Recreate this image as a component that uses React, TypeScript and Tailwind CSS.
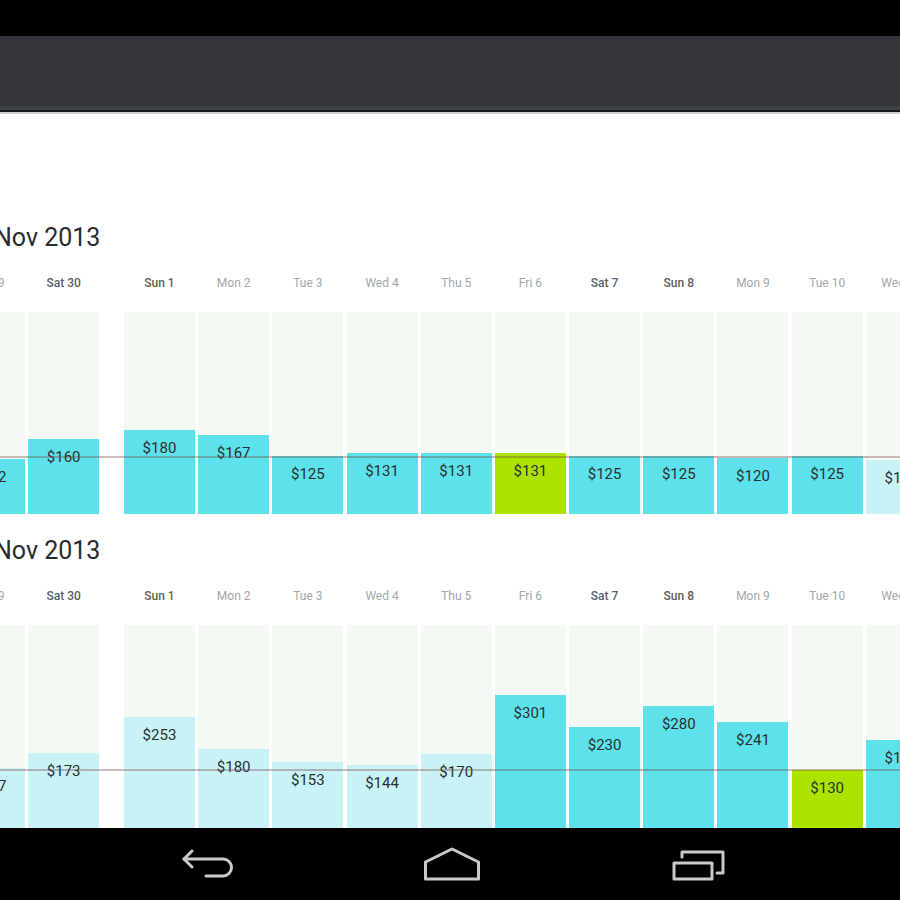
import React from "react";

type Col = { label: string; weekend?: boolean; value: string; h: number; color: "cyan" | "light" | "green" };

const chart1: Col[][] = [
  [
    { label: "Fri 29", value: "$122", h: 55, color: "cyan" },
    { label: "Sat 30", weekend: true, value: "$160", h: 75, color: "cyan" },
  ],
  [
    { label: "Sun 1", weekend: true, value: "$180", h: 84, color: "cyan" },
    { label: "Mon 2", value: "$167", h: 79, color: "cyan" },
    { label: "Tue 3", value: "$125", h: 58, color: "cyan" },
    { label: "Wed 4", value: "$131", h: 61, color: "cyan" },
    { label: "Thu 5", value: "$131", h: 61, color: "cyan" },
    { label: "Fri 6", value: "$131", h: 61, color: "green" },
    { label: "Sat 7", weekend: true, value: "$125", h: 58, color: "cyan" },
    { label: "Sun 8", weekend: true, value: "$125", h: 58, color: "cyan" },
    { label: "Mon 9", value: "$120", h: 56, color: "cyan" },
    { label: "Tue 10", value: "$125", h: 58, color: "cyan" },
    { label: "Wed 11", value: "$116", h: 54, color: "light" },
  ],
];

const chart2: Col[][] = [
  [
    { label: "Fri 29", value: "$137", h: 60, color: "light" },
    { label: "Sat 30", weekend: true, value: "$173", h: 75, color: "light" },
  ],
  [
    { label: "Sun 1", weekend: true, value: "$253", h: 111, color: "light" },
    { label: "Mon 2", value: "$180", h: 79, color: "light" },
    { label: "Tue 3", value: "$153", h: 66, color: "light" },
    { label: "Wed 4", value: "$144", h: 63, color: "light" },
    { label: "Thu 5", value: "$170", h: 74, color: "light" },
    { label: "Fri 6", value: "$301", h: 133, color: "cyan" },
    { label: "Sat 7", weekend: true, value: "$230", h: 101, color: "cyan" },
    { label: "Sun 8", weekend: true, value: "$280", h: 122, color: "cyan" },
    { label: "Mon 9", value: "$241", h: 106, color: "cyan" },
    { label: "Tue 10", value: "$130", h: 58, color: "green" },
    { label: "Wed 11", value: "$199", h: 88, color: "cyan" },
  ],
];

const barColor: Record<Col["color"], string> = {
  cyan: "bg-[#5de1eb]",
  light: "bg-[#c8f2f6]",
  green: "bg-[#ace400]",
};

function Column({ c, chartH }: { c: Col; chartH: string }) {
  return (
    <div className="flex w-[71px] shrink-0 flex-col">
      <div
        className={
          "h-[14px] text-center text-[12px] leading-[14px] whitespace-nowrap " +
          (c.weekend ? "font-medium text-[#5b6066]" : "text-[#a2a7aa]")
        }
      >
        {c.label}
      </div>
      <div className={"mt-[22px] flex flex-col justify-end bg-[#f5f9f3] " + chartH}>
        <div
          className={"w-full pt-[10px] text-center text-[15px] leading-[17px] text-[#2a3031] " + barColor[c.color]}
          style={{ height: c.h }}
        >
          {c.value}
        </div>
      </div>
    </div>
  );
}

function Chart({ title, groups, chartH }: { title: string; groups: Col[][]; chartH: string }) {
  return (
    <div className="flex flex-col">
      <div className="ml-[-6px] h-[30px] pt-[1px] text-[25px] leading-[30px] text-[#2b2b2b] whitespace-nowrap">{title}</div>
      <div className="relative mt-[24px]">
        <div className="ml-[-46px] flex gap-[24.8px]">
          {groups.map((g, gi) => (
            <div key={gi} className="flex shrink-0 gap-[3.2px]">
              {g.map((c, ci) => (
                <Column key={ci} c={c} chartH={chartH} />
              ))}
            </div>
          ))}
        </div>
        <div className="absolute left-0 right-0 top-[180px] h-[2px] bg-[rgba(120,80,80,0.38)]" />
      </div>
    </div>
  );
}

export default function App() {
  return (
    <div
      className="flex h-[900px] w-[900px] flex-col overflow-hidden bg-white"
      style={{ fontFamily: "Roboto, 'Noto Sans', sans-serif" }}
    >
      <div className="h-[36px] shrink-0 bg-black" />
      <div className="h-[70px] shrink-0 bg-[#35363b]" />
      <div className="h-[4px] shrink-0 bg-[#3f4147]" />
      <div className="h-[2px] shrink-0 bg-[#161a20]" />
      <div className="h-[2px] shrink-0 bg-[#d0d0d0]" />

      <div className="mt-[108px] flex flex-col overflow-hidden">
        <Chart title="Nov 2013" groups={chart1} chartH="h-[202px]" />
        <div className="mt-[21px]">
          <Chart title="Nov 2013" groups={chart2} chartH="h-[203px]" />
        </div>
      </div>

      <div className="mt-auto flex h-[72px] shrink-0 items-center bg-black pl-[182px]">
        <svg width="52" height="36" viewBox="0 0 52 36" fill="none" stroke="#c9c9c9" strokeWidth="3" strokeLinecap="round" strokeLinejoin="round">
          <path d="M10 5 L2 13 L10 21" />
          <path d="M2 13 H41 A8.5 8.5 0 0 1 41 30 H24" />
        </svg>
        <svg className="ml-[189px]" width="58" height="36" viewBox="0 0 58 36" fill="none" stroke="#c9c9c9" strokeWidth="3" strokeLinejoin="round">
          <path d="M2.5 16 L29 3 L55.5 16 V33 H2.5 Z" />
        </svg>
        <svg className="ml-[190px]" width="56" height="36" viewBox="0 0 56 36" fill="none" stroke="#c9c9c9" strokeWidth="3" strokeLinejoin="round" strokeLinecap="round">
          <rect x="3" y="17" width="38" height="16" />
          <path d="M11 11 V6 H52 V27 H46" />
        </svg>
      </div>
    </div>
  );
}
